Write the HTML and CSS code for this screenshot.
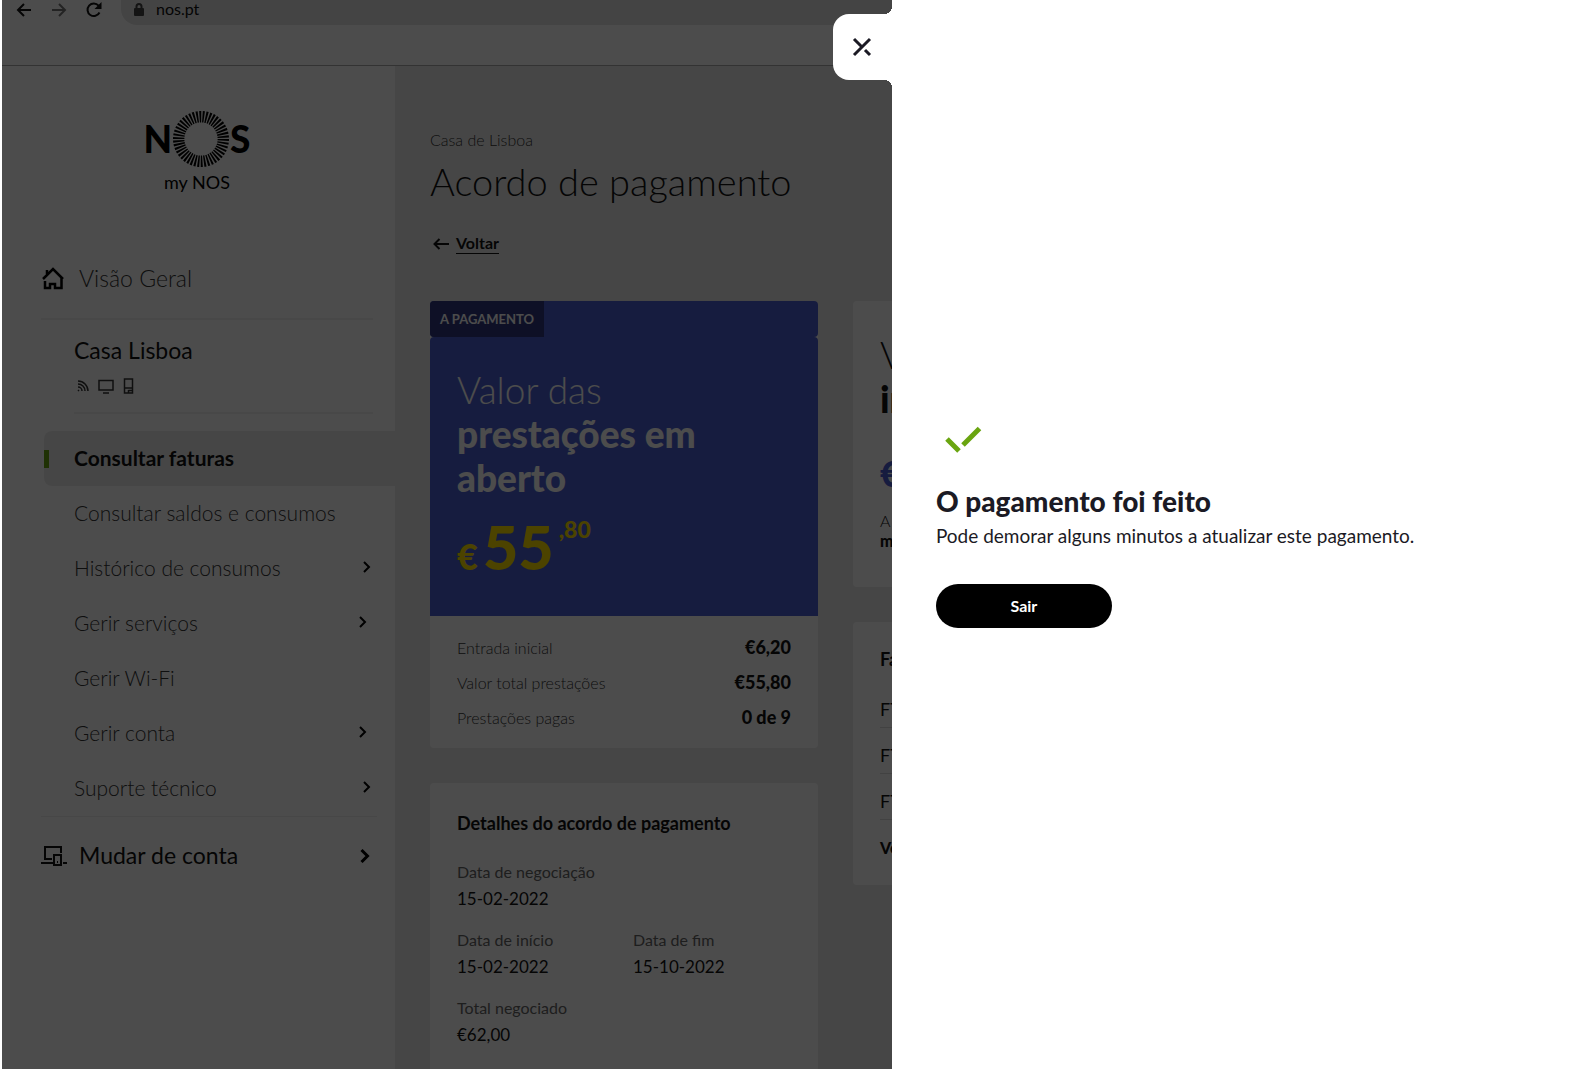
FILE: index.html
```html
<!DOCTYPE html>
<html lang="pt">
<head>
  <meta charset="UTF-8">
  <meta name="viewport" content="width=device-width, initial-scale=1.0">
  <title>my NOS</title>
  <link rel="stylesheet" href="styles.css">
</head>
<body>
  <div class="page">
    <header class="browser-bar">
      <button class="nav-btn" aria-label="Retroceder">
        <svg width="16" height="16" viewBox="0 0 16 16"><path d="M15 8H2M8 2L2 8l6 6"/></svg>
      </button>
      <button class="nav-btn forward" aria-label="Avançar">
        <svg width="16" height="16" viewBox="0 0 16 16"><path d="M1 8h13M8 2l6 6-6 6"/></svg>
      </button>
      <button class="nav-btn" aria-label="Recarregar">
        <svg width="16" height="16" viewBox="0 0 16 16"><path d="M13.500 10.500A6.300 6.300 0 1 1 12.600 3.600L14 5"/><path class="fill" d="M15.500 0v7h-7z"/></svg>
      </button>
      <div class="address">
        <svg width="10" height="13" viewBox="0 0 10 13"><path d="M2.500 6V3.500a2.500 2.500 0 0 1 5 0V6"/><rect class="fill" y="5" width="10" height="8" rx="1"/></svg>
        <span>nos.pt</span>
      </div>
    </header>

    <div class="layout">
      <aside class="sidebar">
        <div class="logo">
          <div class="logo-mark">
            <span>N</span>
            <svg width="58" height="58" viewBox="0 0 58 58"><circle cx="29" cy="29" r="22.300" fill="none" stroke="#000" stroke-width="11.400" pathLength="92" stroke-dasharray="1.150 0.850"/></svg>
            <span>S</span>
          </div>
          <div class="logo-name">my NOS</div>
        </div>

        <a class="overview" href="#">
          <svg width="24" height="24" viewBox="0 0 24 24"><path d="M2 13L12 3l10 10M4 15v7h5v-4h5v4h6.500V11M6 8V4"/></svg>
          Visão Geral
        </a>

        <div class="account">
          <h2>Casa Lisboa</h2>
          <div class="services">
            <svg width="12" height="12" viewBox="0 0 12 12"><path d="M1 1a10 10 0 0 1 10 10M1 4a7 7 0 0 1 7 7M1 7a4 4 0 0 1 4 4M1 10l1 1"/></svg>
            <svg width="16" height="15" viewBox="0 0 16 15"><path d="M1 1.500h14v9.500H1zM5 14h6"/></svg>
            <svg width="11" height="16" viewBox="0 0 11 16"><path d="M1.500 1h8v14h-8zM1.500 10h8M5.500 12v3M5.500 12.500h4"/></svg>
          </div>
        </div>

        <nav class="menu">
          <a class="active" href="#">Consultar faturas</a>
          <a href="#">Consultar saldos e consumos</a>
          <a href="#">Histórico de consumos <svg class="chevron" width="8" height="14" viewBox="0 0 8 14"><path d="M1 2l5 5-5 5"/></svg></a>
          <a class="nested" href="#">Gerir serviços <svg class="chevron" width="8" height="14" viewBox="0 0 8 14"><path d="M1 2l5 5-5 5"/></svg></a>
          <a href="#">Gerir Wi-Fi</a>
          <a class="nested" href="#">Gerir conta <svg class="chevron" width="8" height="14" viewBox="0 0 8 14"><path d="M1 2l5 5-5 5"/></svg></a>
          <a href="#">Suporte técnico <svg class="chevron" width="8" height="14" viewBox="0 0 8 14"><path d="M1 2l5 5-5 5"/></svg></a>
        </nav>

        <a class="switch" href="#">
          <svg width="26" height="22" viewBox="0 0 26 22"><path d="M11 15H4V3h16v6M0 19h12M22 19h4M13 11h7v10h-7zM16 18h1"/></svg>
          Mudar de conta
          <svg class="chevron" width="10" height="16" viewBox="0 0 10 16"><path d="M1.500 3l6 6-6 6"/></svg>
        </a>
      </aside>

      <main class="content">
        <p class="place">Casa de Lisboa</p>
        <h1>Acordo de pagamento</h1>
        <a class="back" href="#">
          <svg width="16" height="12" viewBox="0 0 16 12"><path d="M16 6H2M6.500 1L1.500 6l5 5"/></svg>
          <span>Voltar</span>
        </a>

        <div class="columns">
          <div class="column">
            <section class="card">
              <div class="ribbon"><span>A PAGAMENTO</span></div>
              <div class="amount">
                <h2 class="value-title">Valor das <strong>prestações em aberto</strong></h2>
                <div class="price">
                  <span class="currency">€</span>
                  <span class="units">55</span>
                  <span class="cents">,80</span>
                </div>
              </div>
              <dl class="summary">
                <div><dt>Entrada inicial</dt><dd>€6,20</dd></div>
                <div><dt>Valor total prestações</dt><dd>€55,80</dd></div>
                <div><dt>Prestações pagas</dt><dd>0 de 9</dd></div>
              </dl>
            </section>

            <section class="card details">
              <h3>Detalhes do acordo de pagamento</h3>
              <dl>
                <div class="wide"><dt>Data de negociação</dt><dd>15-02-2022</dd></div>
                <div><dt>Data de início</dt><dd>15-02-2022</dd></div>
                <div><dt>Data de fim</dt><dd>15-10-2022</dd></div>
                <div class="wide"><dt>Total negociado</dt><dd>€62,00</dd></div>
              </dl>
            </section>
          </div>

          <div class="column">
            <section class="card initial">
              <h2 class="value-title">Valor <strong>inicial</strong></h2>
              <div class="initial-price">€</div>
              <p>A</p>
              <p><strong>m</strong></p>
            </section>

            <section class="card invoices">
              <h3>Faturas</h3>
              <ul>
                <li>FT</li>
                <li>FT</li>
                <li>FT</li>
              </ul>
              <a href="#">Ver</a>
            </section>
          </div>
        </div>
      </main>
    </div>
  </div>

  <div class="overlay"></div>

  <div class="drawer" role="dialog" aria-labelledby="drawer-title">
    <button class="close" aria-label="Fechar">
      <svg width="20" height="20" viewBox="0 0 20 20"><path d="M2 18L18 2M2 2l7 7M13 13l5 5"/></svg>
    </button>
    <svg class="check" width="54" height="48" viewBox="0 0 54 48"><path d="M11 18l12 12M27 24L43.500 7.500"/></svg>
    <h2 id="drawer-title">O pagamento foi feito</h2>
    <p>Pode demorar alguns minutos a atualizar este pagamento.</p>
    <button class="exit">Sair</button>
  </div>
</body>
</html>
```
FILE: styles.css
```css
* {
  box-sizing: border-box;
}
body {
  margin: 0;
  font-family: Lato, "Open Sans", sans-serif;
  font-size: 16px;
  color: #111;
  background: #fff;
}
h1, h2, h3, p, dl, dd, ul {
  margin: 0;
  padding: 0;
}
a {
  color: inherit;
  text-decoration: none;
}
button {
  border: none;
  font-family: inherit;
  cursor: pointer;
}
svg {
  flex: none;
  fill: none;
  stroke: currentColor;
  stroke-width: 2;
}
.fill {
  fill: currentColor;
  stroke: none;
}
.page {
  display: flex;
  flex-direction: column;
  height: 100vh;
  padding-left: 2px;
  overflow: hidden;
}

/* browser bar */
.browser-bar {
  display: flex;
  align-items: flex-start;
  gap: 19px;
  height: 66px;
  padding-left: 14px;
  border-bottom: 1px solid #aaa;
}
.nav-btn {
  display: flex;
  width: 16px;
  padding: 2px 0 0;
  background: none;
  color: #111;
}
.nav-btn.forward {
  color: #777;
}
.address {
  display: flex;
  flex: 1;
  align-items: flex-start;
  gap: 12px;
  height: 25px;
  padding: 0 13px;
  border-radius: 0 0 16px 16px;
  background: #e4e4e4;
  line-height: 17px;
}
.address svg {
  margin-top: 3px;
  color: #444;
}

.layout {
  display: flex;
  flex: 1;
  min-height: 0;
}

/* sidebar */
.sidebar {
  width: 393px;
  flex: none;
  padding-left: 39px;
}
.logo {
  display: flex;
  flex-direction: column;
  align-items: center;
  padding: 44px 42px 0 0;
  color: #000;
}
.logo-mark {
  display: flex;
  align-items: center;
  height: 58px;
  font-size: 37px;
  font-weight: 900;
  line-height: 58px;
}
.logo-name {
  font-size: 18px;
  line-height: 28px;
}
.overview {
  display: flex;
  align-items: center;
  gap: 14px;
  height: 83px;
  margin: 41px 22px 0 0;
  border-bottom: 2px solid #f2f2f2;
  color: #333;
  font-size: 23px;
  font-weight: 300;
}
.overview svg {
  color: #000;
  stroke-width: 2.5;
}
.account {
  margin: 0 22px 0 33px;
  padding: 13px 0 14px;
  border-bottom: 2px solid #f2f2f2;
}
.account h2 {
  font-size: 23px;
  font-weight: 400;
  line-height: 34px;
}
.services {
  display: flex;
  align-items: center;
  gap: 9px;
  height: 24px;
  margin-top: 7px;
  padding-left: 3px;
  color: #333;
}
.services svg {
  stroke-width: 1.5;
}
.menu {
  margin: 17px 0 0 3px;
  color: #333;
  font-size: 21px;
  font-weight: 300;
}
.menu a {
  position: relative;
  display: flex;
  align-items: center;
  justify-content: space-between;
  height: 55px;
  padding: 0 24px 3px 30px;
}
.menu a.nested {
  padding-right: 28px;
}
.menu a.active {
  border-radius: 8px 0 0 8px;
  background: #ececec;
  color: #111;
  font-weight: 700;
}
.menu a.active::before {
  content: "";
  position: absolute;
  left: 0;
  top: 19px;
  width: 5px;
  height: 18px;
  background: #6aa510;
}
.chevron {
  color: #000;
}
.switch {
  display: flex;
  align-items: center;
  gap: 12px;
  height: 77px;
  margin: 0 18px 0 0;
  border-top: 1px solid #eee;
  font-size: 23px;
}
.switch .chevron {
  margin: 0 7px 0 auto;
  stroke-width: 3;
}

/* main content */
.content {
  display: flex;
  flex: 1;
  flex-direction: column;
  align-items: flex-start;
  padding: 63px 35px 0;
  background: #ececec;
}
.place {
  color: #333;
  font-weight: 300;
  line-height: 22px;
}
h1 {
  margin-top: 4px;
  font-size: 38px;
  font-weight: 300;
  line-height: 52px;
}
.back {
  display: flex;
  align-items: center;
  gap: 7px;
  margin: 26px 0 47px 3px;
  font-weight: 700;
  line-height: 20px;
}
.back span {
  border-bottom: 1px solid #111;
}
.columns {
  display: grid;
  flex: 1;
  grid-template-columns: 1fr 1fr;
  gap: 35px;
  width: 100%;
  max-width: 811px;
}
.column {
  display: flex;
  flex-direction: column;
  gap: 35px;
}
.card {
  border-radius: 4px;
  background: #fff;
}
.card h3 {
  font-size: 18px;
  line-height: 26px;
}
.ribbon {
  display: flex;
  border-radius: 4px;
  background: #4c60d2;
  overflow: hidden;
}
.ribbon span {
  padding: 0 10px;
  background: #303880;
  color: #fff;
  font-size: 13px;
  font-weight: 700;
  line-height: 36px;
}
.amount {
  padding: 31px 27px 38px;
  border-radius: 4px 4px 0 0;
  background: #4c60d2;
  color: #fff;
}
.value-title {
  font-size: 37px;
  font-weight: 300;
  line-height: 44px;
}
.value-title strong {
  display: block;
  font-weight: 900;
}
.price {
  display: flex;
  align-items: baseline;
  gap: 5px;
  margin-top: 16px;
  color: #ffe000;
  font-weight: 900;
}
.currency {
  font-size: 36px;
  line-height: 36px;
}
.units {
  font-size: 61px;
  line-height: 62px;
}
.cents {
  align-self: flex-start;
  font-size: 23px;
  line-height: 26px;
}
.summary {
  padding: 14px 27px 13px;
}
.summary div {
  display: flex;
  justify-content: space-between;
  line-height: 35px;
}
.summary dt {
  color: #333;
  font-weight: 300;
}
.summary dd {
  font-size: 18px;
  font-weight: 900;
}
.details {
  flex: 1;
  padding: 27px;
}
.details dl {
  display: grid;
  grid-template-columns: 176px 1fr;
  gap: 14px 0;
  margin-top: 22px;
  line-height: 27px;
}
.details .wide {
  grid-column: span 2;
}
.details dt {
  color: #666;
}
.details dd {
  font-size: 17px;
}
.initial {
  padding: 32px 27px 36px;
}
.initial-price {
  margin-top: 14px;
  color: #4c60d2;
  font-size: 36px;
  font-weight: 900;
  line-height: 76px;
}
.initial p {
  font-weight: 300;
  line-height: 20px;
}
.initial strong {
  font-weight: 900;
}
.invoices {
  padding: 24px 27px;
}
.invoices ul {
  margin-top: 10px;
  list-style: none;
}
.invoices li {
  padding-top: 10px;
  border-bottom: 1px solid #ddd;
  font-size: 18px;
  line-height: 35px;
}
.invoices a {
  display: block;
  padding-top: 14px;
  font-weight: 900;
  line-height: 27px;
}

/* drawer */
.overlay {
  position: fixed;
  inset: 0 0 0 2px;
  background: rgba(0, 0, 0, 0.7);
}
.drawer {
  position: fixed;
  top: 0;
  right: 0;
  bottom: 0;
  display: flex;
  flex-direction: column;
  align-items: flex-start;
  justify-content: center;
  width: 43.55%;
  padding: 0 44px 21px;
  background: #fff;
  color: #1b1a24;
}
.close {
  position: absolute;
  top: 14px;
  right: 100%;
  display: flex;
  align-items: center;
  justify-content: center;
  width: 59px;
  height: 66px;
  border-radius: 16px 0 0 16px;
  background: #fff;
  color: #1b1a24;
}
.close::before,
.close::after {
  content: "";
  position: absolute;
  right: 0;
  width: 8px;
  height: 8px;
}
.close::before {
  bottom: 100%;
  background: radial-gradient(circle at 0 0, transparent 8px, #fff 8px);
}
.close::after {
  top: 100%;
  background: radial-gradient(circle at 0 100%, transparent 8px, #fff 8px);
}
.close svg {
  stroke-width: 3;
}
.check {
  color: #6aa510;
  stroke-width: 5;
}
.drawer h2 {
  margin-top: 14px;
  font-size: 28px;
  font-weight: 900;
  line-height: 36px;
}
.drawer p {
  font-size: 19px;
  line-height: 34px;
}
.exit {
  width: 176px;
  height: 44px;
  margin-top: 31px;
  border-radius: 22px;
  background: #000;
  color: #fff;
  font-size: 16px;
  font-weight: 700;
}
```
